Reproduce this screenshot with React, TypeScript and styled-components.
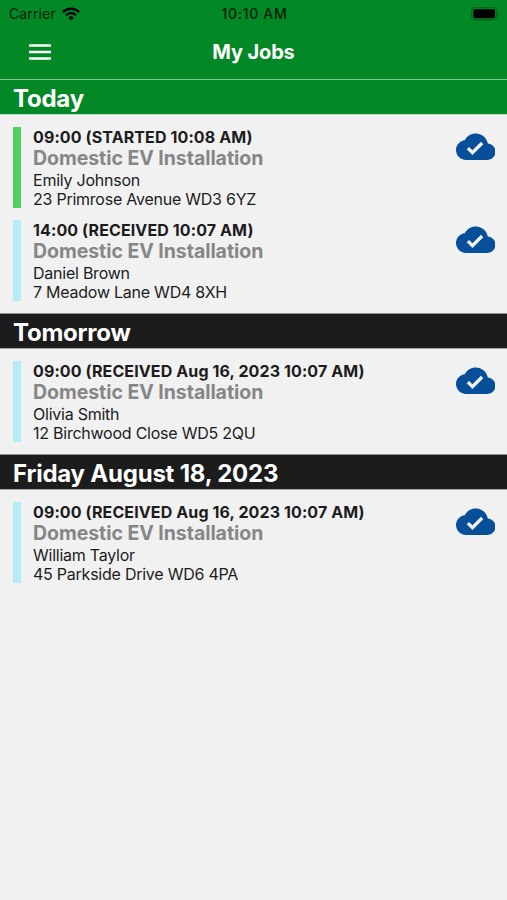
import React from "react";
import styled, { createGlobalStyle } from "styled-components";

const GlobalStyle = createGlobalStyle`
  * { box-sizing: border-box; }
  body { margin: 0; background: #f1f1f1; }
`;

const Screen = styled.main`
  width: 100%;
  min-height: 100vh;
  background: #f1f1f1;
  color: #1c1c1c;
  font-family: Inter, "Liberation Sans", sans-serif;
  overflow: hidden;
`;

const Header = styled.header`
  height: 79px;
  background: #028925;
`;

const StatusBar = styled.div`
  display: grid;
  grid-template-columns: 1fr auto 1fr;
  align-items: center;
  height: 27px;
  padding: 0 7px 0 9px;
  color: #03200a;
  font-size: 14px;
  line-height: 27px;
`;

const Carrier = styled.div`
  display: flex;
  align-items: center;
  gap: 6px;
  letter-spacing: 0.1px;
`;

const Clock = styled.time`
  font-weight: 500;
  letter-spacing: 0.7px;
`;

const Battery = styled.div`
  display: flex;
  justify-content: flex-end;
`;

const NavBar = styled.nav`
  display: grid;
  grid-template-columns: 80px 1fr 80px;
  align-items: center;
  height: 50px;
  color: #fff;
`;

const MenuButton = styled.button`
  display: flex;
  margin-left: 29px;
  width: 22px;
  padding: 0;
  border: 0;
  background: none;
  color: inherit;
`;

const Title = styled.h1`
  margin: 0;
  text-align: center;
  font-size: 20px;
  font-weight: 700;
  line-height: 50px;
  letter-spacing: -0.15px;
`;

const DayHeading = styled.h2<{ $today?: boolean }>`
  height: 36px;
  margin: 0;
  padding: 1px 0 0 13px;
  border-top: 1px solid ${(p) => (p.$today ? "#86c995" : "#8e8e8e")};
  border-bottom: 1px solid ${(p) => (p.$today ? "#b8dfc1" : "#a5a5a5")};
  background: ${(p) => (p.$today ? "#028925" : "#1c1c1c")};
  color: #fff;
  font-size: 24px;
  font-weight: 700;
  line-height: 35px;
  letter-spacing: -0.22px;
`;

const JobList = styled.ul`
  display: flex;
  flex-direction: column;
  gap: 12px;
  margin: 0;
  padding: 12px 12px 12px 13px;
  list-style: none;
`;

const JobRow = styled.li`
  display: grid;
  grid-template-columns: 8px 1fr 39.5px;
  grid-template-rows: 81px;
  column-gap: 12px;
`;

const StatusStripe = styled.span<{ $started?: boolean }>`
  background: ${(p) => (p.$started ? "#4fd160" : "#b4ecf8")};
`;

const Details = styled.div`
  white-space: nowrap;
`;

const JobTime = styled.div`
  font-size: 16px;
  font-weight: 700;
  line-height: 20px;
  letter-spacing: 0.11px;
`;

const JobType = styled.div`
  color: #868686;
  font-size: 19.5px;
  font-weight: 700;
  line-height: 23px;
  letter-spacing: -0.05px;
`;

const JobLine = styled.div`
  font-size: 16px;
  line-height: 19px;
  letter-spacing: -0.24px;
`;

const Contact = styled.div`
  padding-top: 1px;
`;

const SyncIcon = styled.svg`
  width: 39.5px;
  height: 39.5px;
  fill: #084f99;
`;

type Job = { time: string; customer: string; address: string; started?: boolean };
type Day = { label: string; today?: boolean; jobs: Job[] };

const days: Day[] = [
  {
    label: "Today",
    today: true,
    jobs: [
      { time: "09:00 (STARTED 10:08 AM)", customer: "Emily Johnson", address: "23 Primrose Avenue WD3 6YZ", started: true },
      { time: "14:00 (RECEIVED 10:07 AM)", customer: "Daniel Brown", address: "7 Meadow Lane WD4 8XH" },
    ],
  },
  {
    label: "Tomorrow",
    jobs: [{ time: "09:00 (RECEIVED Aug 16, 2023 10:07 AM)", customer: "Olivia Smith", address: "12 Birchwood Close WD5 2QU" }],
  },
  {
    label: "Friday August 18, 2023",
    jobs: [{ time: "09:00 (RECEIVED Aug 16, 2023 10:07 AM)", customer: "William Taylor", address: "45 Parkside Drive WD6 4PA" }],
  },
];

const WifiIcon = () => (
  <svg width="18" height="14" viewBox="0 0 18 14" fill="none" stroke="#000" strokeWidth="2.3">
    <path d="M.9 5.1a11.5 11.5 0 0 1 16.2 0" />
    <path d="M3.9 8.2a7.2 7.2 0 0 1 10.2 0" />
    <path d="M9 13.5 6.2 10.7a4 4 0 0 1 5.6 0z" fill="#000" stroke="none" />
  </svg>
);

const BatteryIcon = () => (
  <svg width="29" height="14" viewBox="0 0 29 14">
    <rect x=".7" y=".7" width="24.6" height="12.2" rx="3.4" fill="none" stroke="#02651b" strokeWidth="1.3" />
    <rect x="2.3" y="2.3" width="21.7" height="9" rx="1.8" fill="#000" />
    <path d="M26.8 4.8v4c1.8-.7 1.8-3.3 0-4z" fill="#02651b" />
  </svg>
);

const MenuIcon = () => (
  <svg width="22" height="16" viewBox="0 0 22 16" fill="#fff">
    <path d="M0 .3h22v2.4H0zM0 6.8h22v2.4H0zM0 13.3h22v2.4H0z" />
  </svg>
);

export default function App() {
  return (
    <Screen>
      <GlobalStyle />
      <Header>
        <StatusBar>
          <Carrier>
            <span>Carrier</span>
            <WifiIcon />
          </Carrier>
          <Clock>10:10 AM</Clock>
          <Battery>
            <BatteryIcon />
          </Battery>
        </StatusBar>
        <NavBar>
          <MenuButton aria-label="Menu">
            <MenuIcon />
          </MenuButton>
          <Title>My Jobs</Title>
        </NavBar>
      </Header>
      {days.map((day) => (
        <section key={day.label}>
          <DayHeading $today={day.today}>{day.label}</DayHeading>
          <JobList>
            {day.jobs.map((job) => (
              <JobRow key={job.customer}>
                <StatusStripe $started={job.started} />
                <Details>
                  <JobTime>{job.time}</JobTime>
                  <JobType>Domestic EV Installation</JobType>
                  <Contact>
                    <JobLine>{job.customer}</JobLine>
                    <JobLine>{job.address}</JobLine>
                  </Contact>
                </Details>
                <SyncIcon viewBox="0 0 24 24">
                  <path d="M19.35 10.04C18.67 6.59 15.64 4 12 4 9.11 4 6.6 5.64 5.35 8.04 2.34 8.36 0 10.91 0 14c0 3.31 2.69 6 6 6h13c2.76 0 5-2.24 5-5 0-2.64-2.05-4.78-4.65-4.96zM10 17l-3.5-3.5 1.41-1.41L10 14.17 15.18 9l1.41 1.41L10 17z" />
                </SyncIcon>
              </JobRow>
            ))}
          </JobList>
        </section>
      ))}
    </Screen>
  );
}
